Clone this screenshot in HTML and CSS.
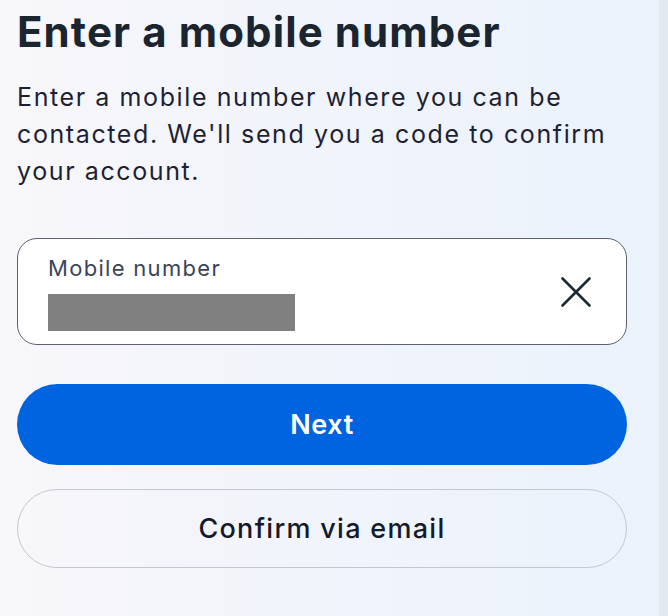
FILE: index.html
```html
<!DOCTYPE html>
<html lang="en">
<head>
<meta charset="utf-8">
<link rel="stylesheet" href="styles.css">
</head>
<body>
<div class="screen">
  <main class="content">
    <h1 class="title">Enter a mobile number</h1>
    <p class="desc">Enter a mobile number where you can be contacted. We'll send you a code to confirm your account.</p>
    <div class="field">
      <div class="field-text">
        <span class="field-label">Mobile number</span>
        <span class="redacted"></span>
      </div>
      <svg class="clear" width="30" height="30" viewBox="0 0 30 30" aria-hidden="true">
        <path d="M1.5 1.5 L28.5 28.5 M28.5 1.5 L1.5 28.5" stroke="#1c2b33" stroke-width="2.6" stroke-linecap="round" fill="none"/>
      </svg>
    </div>
    <button class="btn btn-primary">Next</button>
    <button class="btn btn-outline">Confirm via email</button>
  </main>
  <div class="edge"></div>
</div>
</body>
</html>
```
FILE: styles.css
```css
* { box-sizing: border-box; }
html, body { margin: 0; padding: 0; }
body {
  width: 668px;
  height: 616px;
  overflow: hidden;
  font-family: Inter, "Open Sans", sans-serif;
  color: #1c1e2b;
}
.screen {
  display: flex;
  height: 616px;
  background: linear-gradient(90deg, #f8f7fa 0%, #f1f4fb 45%, #ebf2fc 100%);
}
.content {
  width: 659px;
  padding: 8px 32px 0 17px;
  display: flex;
  flex-direction: column;
}
.edge {
  width: 9px;
  background: #e4e9f1;
}
.title {
  margin: 0;
  font-size: 42px;
  line-height: 48px;
  font-weight: 700;
  color: #1b2530;
  letter-spacing: 1.1px;
  white-space: nowrap;
}
.desc {
  margin: 23px 0 0;
  font-size: 25px;
  line-height: 37px;
  font-weight: 400;
  color: #1e1f33;
  letter-spacing: 1.6px;
}
.field {
  margin-top: 48px;
  height: 107px;
  background: #ffffff;
  border: 1.5px solid #5b6170;
  border-radius: 20px;
  display: flex;
  align-items: center;
  justify-content: space-between;
  padding: 4px 35px 0 30px;
}
.field-text {
  display: flex;
  flex-direction: column;
  gap: 14px;
}
.field-label {
  font-size: 22px;
  line-height: 24px;
  color: #3b4459;
  letter-spacing: 1.3px;
}
.redacted {
  display: block;
  width: 247px;
  height: 37px;
  background: #808080;
}
.clear { display: block; margin-top: -4px; }
.btn {
  display: block;
  width: 100%;
  border-radius: 41px;
  font-family: Inter, "Open Sans", sans-serif;
  cursor: pointer;
}
.btn-primary {
  margin-top: 39px;
  height: 81px;
  background: #0064e0;
  border: none;
  color: #ffffff;
  font-size: 27px;
  font-weight: 600;
  letter-spacing: 0.6px;
}
.btn-outline {
  margin-top: 24px;
  height: 79px;
  background: transparent;
  border: 1px solid #c3c8cf;
  color: #141a2a;
  font-size: 27px;
  font-weight: 500;
  letter-spacing: 1.3px;
}
```
